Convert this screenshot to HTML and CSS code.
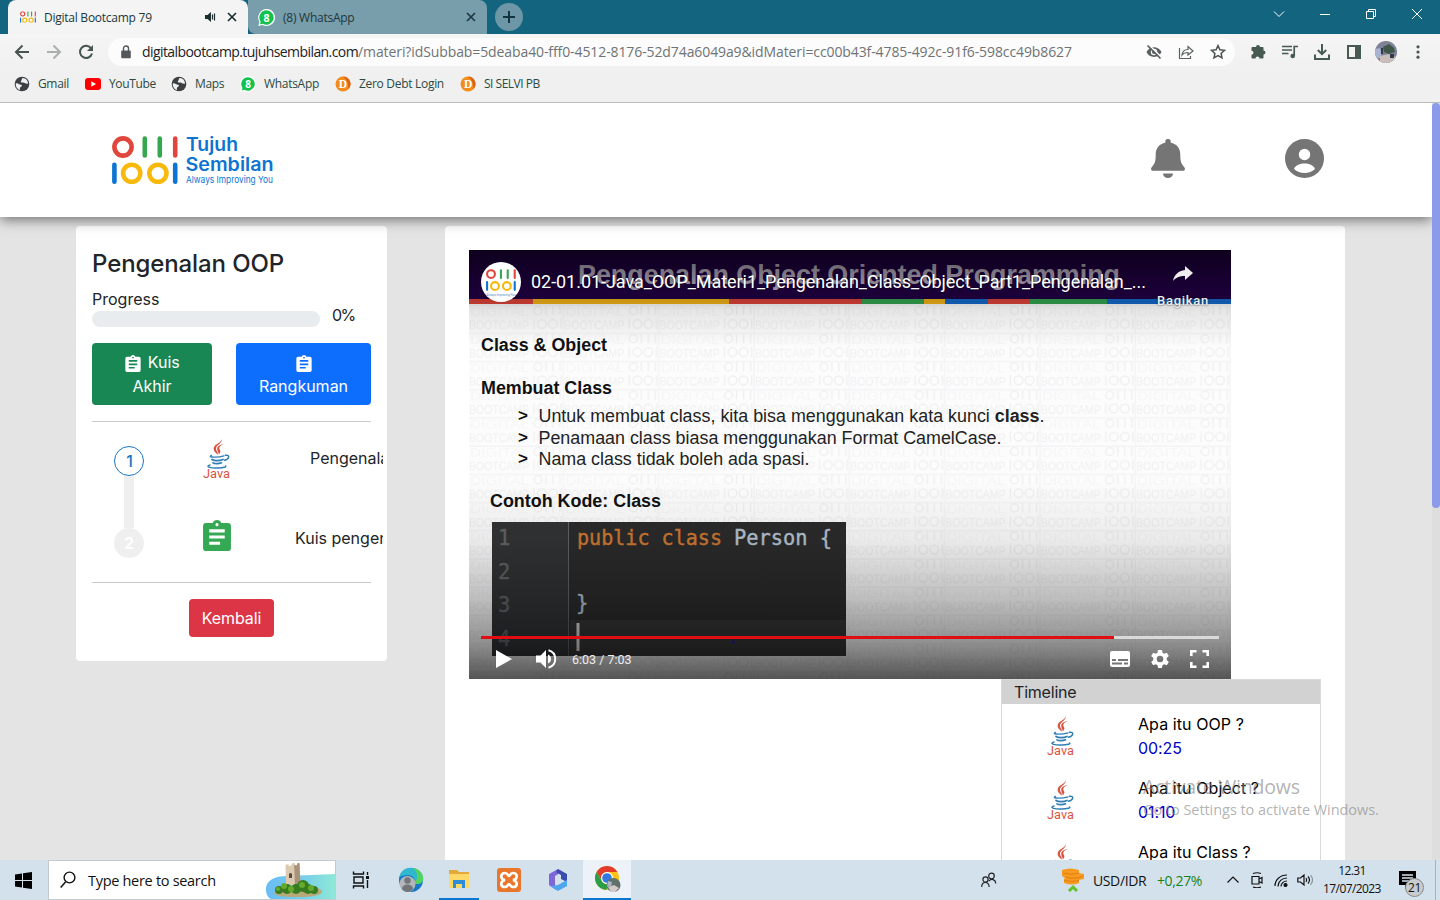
FILE: index.html
```html
<!DOCTYPE html>
<html lang="id">
<head>
<meta charset="utf-8">
<title>Digital Bootcamp 79</title>
<link rel="stylesheet" href="styles.css">
</head>
<body>
<svg class="defs" width="0" height="0">
  <symbol id="java" viewBox="0 0 28 40">
    <g fill="#d9533f">
      <path d="M18.500 0c1.500 4-5.500 6-5.500 9.500 0 2.500 2 3.500 2 6-4.500-3-5.500-6-3-9C14 4.500 18.500 3.500 18.500 0z"/>
      <path d="M21 5c-4 1.500-5.500 3.500-4.300 5.500 1.200 2 .8 3.500-1 5 .3-2-1.700-3.500-1.500-6C14.500 7 17.500 5.300 21 5z"/>
    </g>
    <g fill="none" stroke="#2f7fb5" stroke-linecap="round">
      <path d="M8.500 16.300C3.500 18.500 15 18.800 21 16.800" stroke-width="1.300"/>
      <path d="M9 20.500C11 22 17 22 20 20.500M10 23.800C11.500 25 16 25 18.500 23.800" stroke-width="1.700"/>
      <path d="M22.500 16.300C27.500 15.500 26.500 20 21.500 21.300" stroke-width="1.400"/>
      <path d="M7 26C1 28 9 29.300 15 29C20 28.800 24 28 22.500 27" stroke-width="1.400"/>
    </g>
    <text x="0" y="39" class="java-word" textLength="27" lengthAdjust="spacingAndGlyphs">Java</text>
  </symbol>
  <symbol id="clip" viewBox="3 1 18 20">
    <path fill="currentColor" fill-rule="evenodd" d="M19 3h-4.200a3 3 0 0 0-5.600 0H5a2 2 0 0 0-2 2v14a2 2 0 0 0 2 2h14a2 2 0 0 0 2-2V5a2 2 0 0 0-2-2zM12 3a1 1 0 1 1 0 2 1 1 0 0 1 0-2zm2 14H7v-2h7zm3-4H7v-2h10zm0-4H7V7h10z"/>
  </symbol>
  <symbol id="globe" viewBox="0 0 16 16">
    <circle cx="8" cy="8" r="7.300" fill="#3c4043"/>
    <path d="M1.800 7.500C4 6.800 5 8.500 7 8.800c1.500.3 1 2-.4 2.300-1 .4-.4 2-1 3.100C3 13 1.500 10.500 1.800 7.500zM8.500 2c-1.300 1-.2 2-1.300 2.700C6 5.500 7.300 6.700 9 6.500c2-.1 2 1.500 4.900 1.300C14.300 4.800 12 2 8.500 2z" fill="#f0f0f0"/>
  </symbol>
  <symbol id="wa" viewBox="0 0 16 16">
    <path d="M8 0a8 8 0 1 1-3.800 15L.3 16l1-3.900A8 8 0 0 1 8 0z" fill="#fff"/>
    <path d="M8 1.200a6.800 6.800 0 1 1-3.600 12.600l-2.600.7.700-2.600A6.800 6.800 0 0 1 8 1.200z" fill="#12c24c"/>
    <text x="8" y="11.800" class="wa-num" text-anchor="middle">8</text>
  </symbol>
  <symbol id="debt" viewBox="0 0 16 16">
    <circle cx="8" cy="8" r="7.500" fill="#f28c1c"/>
    <path d="M8 .5a7.500 7.500 0 0 1 5 13.100C14 9 12 3 8 .5z" fill="#d9621a"/>
    <text x="7.800" y="12" class="debt-d" text-anchor="middle">D</text>
  </symbol>
  <symbol id="mark" viewBox="0 0 66 48">
    <g fill="none" stroke-width="4.600" stroke-linecap="round">
      <g stroke="#e0463c"><circle cx="11" cy="11" r="8.600"/><path d="M63.200 2.500v17"/></g>
      <path d="M32.800 2.500v17M47.800 2.500v17" stroke="#37a650"/>
      <path d="M2.400 28.700v17M63.200 28.700v17" stroke="#0e74d2"/>
      <g stroke="#f8b90d"><circle cx="19.700" cy="37.300" r="8.600"/><circle cx="45.900" cy="37.300" r="8.600"/></g>
    </g>
  </symbol>
</svg>

<div class="screen">
  <div class="tabstrip">
    <div class="tab tab-on">
      <svg class="tab-ico" viewBox="0 0 66 48"><use href="#mark"/></svg>
      <span class="tab-name">Digital Bootcamp 79</span>
      <svg class="speaker" width="12" height="12" viewBox="0 0 12 12"><path d="M1 4h2.500L7 1v10L3.500 8H1z" fill="#1d2f31"/><path d="M8.500 3.500v5M10.500 2.500v7" stroke="#1d2f31" stroke-width="1.200"/></svg>
      <svg width="10" height="10" viewBox="0 0 10 10"><path d="M1 1l8 8M9 1L1 9" stroke="#1d2f31" stroke-width="1.700"/></svg>
    </div>
    <div class="tab tab-off">
      <svg class="tab-wa" viewBox="0 0 16 16"><use href="#wa"/></svg>
      <span class="tab-name tab-name-wa">(8) WhatsApp</span>
      <svg width="10" height="10" viewBox="0 0 10 10"><path d="M1 1l8 8M9 1L1 9" stroke="#1d3a44" stroke-width="1.700"/></svg>
    </div>
    <div class="newtab"><svg width="12" height="12" viewBox="0 0 12 12"><path d="M6 0v12M0 6h12" stroke="#12333f" stroke-width="2"/></svg></div>
    <div class="wincontrols">
      <svg viewBox="0 0 12 12"><path d="M1 3.500l5 5 5-5" /></svg>
      <svg viewBox="0 0 12 12"><path d="M1 6.500h10"/></svg>
      <svg viewBox="0 0 12 12"><path d="M1.500 3.500h7v7h-7zM3.500 3.500v-2h7v7h-2"/></svg>
      <svg viewBox="0 0 12 12"><path d="M1 1l10 10M11 1L1 11"/></svg>
    </div>
  </div>

  <div class="toolbar">
    <div class="nav">
      <svg viewBox="0 0 16 16"><path d="M15 8H2.500M8.500 1.500L2 8l6.500 6.500" fill="none" stroke="#46554f" stroke-width="2"/></svg>
      <svg viewBox="0 0 16 16"><path d="M1 8h12.500M7.500 1.500L14 8l-6.500 6.500" fill="none" stroke="#abb0ae" stroke-width="2"/></svg>
      <svg viewBox="0 0 16 16"><path d="M13.200 4.500A6.100 6.100 0 1 0 14 9.500" fill="none" stroke="#46554f" stroke-width="2"/><path d="M15 1v6H9z" fill="#46554f"/></svg>
    </div>
    <div class="omnibox">
      <svg class="lock" viewBox="0 0 10 14"><path d="M1 5.500h8a.8.800 0 0 1 .8.800v6a1 1 0 0 1-1 1H1.200a1 1 0 0 1-1-1v-6A.8.800 0 0 1 1 5.500z" fill="#54585b"/><path d="M2.500 6V3.500a2.500 2.500 0 0 1 5 0V6" fill="none" stroke="#54585b" stroke-width="1.400"/></svg>
      <span class="url"><span class="host">digitalbootcamp.tujuhsembilan.com</span><span class="path">/materi?idSubbab=5deaba40-fff0-4512-8176-52d74a6049a9&amp;idMateri=cc00b43f-4785-492c-91f6-598cc49b8627</span></span>
      <span class="omni-icons">
        <svg viewBox="0 0 16 16"><path d="M.5 8c3-6.500 12-6.500 15 0-3 6.500-12 6.500-15 0z" fill="#5a5f60"/><circle cx="8" cy="8" r="3.200" fill="#fbfbfb"/><circle cx="8" cy="8" r="2" fill="#5a5f60"/><path d="M2.800 .8l13 13" stroke="#fbfbfb" stroke-width="1.600"/><path d="M1.500 1.500l13 13" stroke="#5a5f60" stroke-width="1.700"/></svg>
        <svg viewBox="0 0 16 16" fill="none" stroke="#5a5f60" stroke-width="1.200"><path d="M1.500 4v10.500h11V12M4 11c.5-4 3-5.500 6-5.500V2.500L15 7l-5 4V8.500C7.500 8.500 5.500 9 4 11z"/></svg>
        <svg viewBox="0 0 16 16"><path d="M8 1.600l1.900 4.200 4.600.5-3.400 3.100.9 4.500-4-2.300-4 2.300.9-4.500L1.500 6.300l4.600-.5z" fill="none" stroke="#4c5152" stroke-width="1.500"/></svg>
      </span>
    </div>
    <div class="ext">
      <svg viewBox="0 0 16 16"><path d="M6 3a2 2 0 1 1 4 0h2.700c.5 0 .8.300.8.800V6.500a2 2 0 1 1 0 4v3.200c0 .5-.3.800-.8.800H9.500a2 2 0 0 0-4 0H2.300a.8.800 0 0 1-.8-.8v-3a2 2 0 1 0 0-4V3.800c0-.5.3-.8.800-.8z" fill="#465a52"/></svg>
      <svg viewBox="0 0 16 16"><path d="M0 2.500h10M0 6h10M0 9.500h6.500M12.200 12V2.500H16" stroke="#465a52" stroke-width="1.700" fill="none"/><circle cx="10.700" cy="12" r="2.300" fill="#465a52"/></svg>
      <svg viewBox="0 0 16 16" fill="none" stroke="#465a52" stroke-width="2"><path d="M8 0v10M3.800 6L8 10.200 12.200 6M1 10.500V15h14v-4.500"/></svg>
      <svg viewBox="0 0 16 16"><path d="M1 1h14v14H1zM3 3v10h6V3z" fill="#465a52" fill-rule="evenodd"/></svg>
      <svg class="avatar" viewBox="0 0 22 22"><defs><clipPath id="av"><circle cx="11" cy="11" r="11"/></clipPath></defs><g clip-path="url(#av)"><path fill="#7d8096" d="M0 0h22v22H0z"/><path fill="#3f5648" d="M8 6l6-3 5 4 1 4-6 2-5-2z"/><path fill="#a8b3d0" d="M0 8l5-1 2 5-2 5-5 1z"/><path fill="#cbbdb9" d="M5 15l9-2 7 3-5 6H5z"/><path fill="#32394e" d="M6 7h2v6H6zM15 13h4v4h-4z"/></g></svg>
      <svg viewBox="0 0 16 16" fill="#465a52"><circle cx="8" cy="2.800" r="1.600"/><circle cx="8" cy="8" r="1.600"/><circle cx="8" cy="13.200" r="1.600"/></svg>
    </div>
  </div>

  <div class="bookmarks">
    <span class="bm bm-gmail"><svg><use href="#globe"/></svg>Gmail</span>
    <span class="bm bm-yt"><svg viewBox="0 0 16 16"><rect y="2" width="16" height="12" rx="3" fill="#f00"/><path d="M6.300 5.300v5.400L11 8z" fill="#fff"/></svg>YouTube</span>
    <span class="bm bm-maps"><svg><use href="#globe"/></svg>Maps</span>
    <span class="bm bm-wa"><svg><use href="#wa"/></svg>WhatsApp</span>
    <span class="bm bm-debt"><svg><use href="#debt"/></svg>Zero Debt Login</span>
    <span class="bm bm-selvi"><svg><use href="#debt"/></svg>SI SELVI PB</span>
  </div>

  <div class="viewport">
    <div class="page">
      <header class="site-head">
        <svg class="logo" width="166" height="52" viewBox="0 0 166 52">
          <svg x="0" y="1" width="66" height="48"><use href="#mark"/></svg>
          <g fill="#0e74d2"><text x="74" y="15.500" class="logo-a" textLength="52" lengthAdjust="spacingAndGlyphs">Tujuh</text>
          <text x="73.500" y="35.500" class="logo-a" textLength="88" lengthAdjust="spacingAndGlyphs">Sembilan</text>
          <text x="74" y="47.500" class="logo-b" textLength="87" lengthAdjust="spacingAndGlyphs">Always Improving You</text></g>
        </svg>
        <div class="head-icons">
          <svg width="34" height="39" viewBox="0 0 34 39" fill="#757575"><path d="M17 0a2.500 2.500 0 0 1 2.500 3.500C26 5 29.300 9.500 29.300 15.500c0 7 .8 9 4.200 13 1 1.500.3 3.300-1.500 3.300H2C.2 31.800-.5 30 .5 28.500c3.400-4 4.200-6 4.200-13 0-6 3.300-10.500 9.800-12A2.500 2.500 0 0 1 17 0zM12 34.500h10a5 4.500 0 0 1-10 0z"/></svg>
          <svg width="39" height="39" viewBox="0 0 39 39"><circle cx="19.500" cy="19.500" r="19.500" fill="#757575"/><circle cx="19.500" cy="15.500" r="5.700" fill="#fff"/><path d="M9 30c1.500-4 6-5.500 10.500-5.500S28.500 26 30 30c-5.500 5.300-15.500 5.300-21 0z" fill="#fff"/></svg>
        </div>
      </header>

      <div class="columns">
        <aside class="side">
          <h1>Pengenalan OOP</h1>
          <div class="progress">
            <div class="progress-l"><span>Progress</span><div class="bar"></div></div>
            <span class="pct">0%</span>
          </div>
          <div class="btns">
            <button class="btn green"><svg class="bclip"><use href="#clip"/></svg> Kuis<br>Akhir</button>
            <button class="btn blue"><svg class="bclip"><use href="#clip"/></svg><br>Rangkuman</button>
          </div>
          <div class="steps">
            <div class="rail"><span class="dot dot-on">1</span><span class="link"></span><span class="dot">2</span></div>
            <div class="lessons">
              <div class="lesson"><svg class="jv"><use href="#java"/></svg><span class="lesson-a">Pengenalan Class Object</span></div>
              <div class="lesson"><svg class="gclip"><use href="#clip"/></svg><span class="lesson-b">Kuis pengenalan</span></div>
            </div>
          </div>
          <button class="btn red">Kembali</button>
        </aside>

        <main class="main">
          <div class="video">
            <svg class="slide" width="762" height="429" viewBox="469 250 762 429">
              <defs>
                <pattern id="wm" patternUnits="userSpaceOnUse" x="469" y="306" width="95.300" height="28.200">
                  <path d="M0 27.500h95M94.500 0v28" stroke="#f4f4f7" stroke-width="1.400"/>
                  <g class="wm"><text x="1" y="10" textLength="59" lengthAdjust="spacingAndGlyphs" opacity=".5">DIGITAL</text><text x="0" y="23" textLength="60" lengthAdjust="spacingAndGlyphs">BOOTCAMP</text></g>
                  <g fill="none" stroke="#f0f0f1" stroke-width="1.500"><circle cx="69" cy="4.500" r="4"/><path d="M77 0v9M84 0v9M91 0v9M65 13v10M92 13v10"/><circle cx="73" cy="18" r="4.300"/><circle cx="84" cy="18" r="4.300"/></g>
                </pattern>
                <linearGradient id="fadeT" x2="0" y2="1"><stop offset="0" stop-color="#000" stop-opacity=".58"/><stop offset=".35" stop-color="#000" stop-opacity=".25"/><stop offset=".62" stop-color="#000" stop-opacity=".09"/><stop offset="1" stop-color="#000" stop-opacity="0"/></linearGradient>
                <linearGradient id="fadeB" x2="0" y2="1"><stop offset="0" stop-color="#000" stop-opacity="0"/><stop offset=".3" stop-color="#000" stop-opacity=".07"/><stop offset=".6" stop-color="#000" stop-opacity=".25"/><stop offset=".82" stop-color="#000" stop-opacity=".43"/><stop offset="1" stop-color="#000" stop-opacity=".66"/></linearGradient>
              </defs>
              <path fill="#fcfcfc" d="M469 250h762v429H469z"/>
              <path fill="url(#wm)" d="M469 304h762v375H469z"/>
              <path fill="#210044" d="M469 250h762v49H469z"/>
              <text x="578" y="284" class="ghost" textLength="542" lengthAdjust="spacingAndGlyphs">Pengenalan Object Oriented Programming</text>
              <g><path fill="#d84238" d="M469 299h64v5h-64zM729 299h133v5H729zM988 299h42v5h-42z"/><path fill="#eeb018" d="M533 299h196v5H533zM924 299h21v5h-21z"/><path fill="#33a04f" d="M862 299h62v5h-62zM1030 299h77v5h-77z"/><path fill="#1267c6" d="M945 299h43v5h-43zM1107 299h124v5h-124z"/></g>
              <g class="slide-h">
                <text x="481" y="351" textLength="126" lengthAdjust="spacingAndGlyphs">Class &amp; Object</text>
                <text x="481" y="394" textLength="131" lengthAdjust="spacingAndGlyphs">Membuat Class</text>
                <text x="490" y="506.500" textLength="171" lengthAdjust="spacingAndGlyphs">Contoh Kode: Class</text>
                <text x="518" y="421" class="gt">&gt;</text><text x="518" y="442.500" class="gt">&gt;</text><text x="518" y="464" class="gt">&gt;</text>
              </g>
              <g class="slide-p">
                <text x="538.500" y="422" textLength="506" lengthAdjust="spacingAndGlyphs">Untuk membuat class, kita bisa menggunakan kata kunci <tspan class="b">class</tspan>.</text>
                <text x="538.500" y="443.500" textLength="463" lengthAdjust="spacingAndGlyphs">Penamaan class biasa menggunakan Format CamelCase.</text>
                <text x="538.500" y="465" textLength="271" lengthAdjust="spacingAndGlyphs">Nama class tidak boleh ada spasi.</text>
              </g>
              <path fill="#2b2b2b" d="M492 522h354v134H492z"/><path fill="#313335" d="M492 522h76v134h-76z"/><path fill="#363636" d="M570 620h276v36H570z"/><path stroke="#606264" d="M568.500 522v134"/>
              <g class="code">
                <text x="577" y="545" fill="#cc7832" stroke="#cc7832" textLength="145" lengthAdjust="spacingAndGlyphs">public class</text>
                <text x="734" y="545" fill="#b4c1d0" stroke="#b4c1d0" textLength="98" lengthAdjust="spacingAndGlyphs">Person {</text>
                <text x="576" y="610" fill="#b4c1d0" stroke="#b4c1d0">}</text>
                <g fill="#606366" class="nums"><text x="498" y="545">1</text><text x="498" y="579">2</text><text x="498" y="612">3</text><text x="498" y="646">4</text></g>
              </g>
              <path fill="#ddd" d="M576.500 623h3v28h-3z"/>
              <circle cx="733" cy="642" r="1.500" fill="#1818c0"/>
              <path fill="url(#fadeT)" d="M469 250h762v98H469z"/>
              <path fill="url(#fadeB)" d="M469 480h762v199H469z"/>
            </svg>
            <div class="v-top">
              <span class="channel"><svg width="30" height="22" viewBox="0 0 66 48"><use href="#mark"/></svg><span>Always Improving You</span></span>
              <span class="v-title">02-01.01-Java_OOP_Materi1_Pengenalan_Class_Object_Part1_Pengenalan_...</span>
              <span class="share"><svg width="22" height="18" viewBox="0 0 22 18"><path d="M13 1l8 7-8 7v-4C7 11 4 12.500 1 16 2 10 6 6 13 5z" fill="#eee"/></svg>Bagikan</span>
            </div>
            <div class="v-bottom">
              <div class="seek"><div class="seek-done"></div></div>
              <div class="ctl">
                <svg class="c-play" width="16" height="18" viewBox="0 0 16 18"><path d="M0 0l16 9L0 18z" fill="#fff"/></svg>
                <svg class="c-vol" width="21" height="20" viewBox="0 0 21 20"><path d="M0 6.500h4.500L10 1v18l-5.500-5.500H0z" fill="#fff"/><path d="M12 5.500c4 1.500 4 7.500 0 9z" fill="#fff"/><path d="M12.500 1.300c9 2.500 9 14.900 0 17.400" fill="none" stroke="#fff" stroke-width="2"/></svg>
                <span class="time">6:03 / 7:03</span>
                <svg class="c-cc" width="20" height="16" viewBox="0 0 20 16"><rect width="20" height="16" rx="2" fill="#fff"/><path d="M2 9h4M8 9h10M2 12.500h10M14 12.500h4" stroke="#777" stroke-width="1.800"/></svg>
                <svg class="c-set" width="20" height="20" viewBox="0 0 20 20"><path fill="#fff" fill-rule="evenodd" d="M8 1h4l.5 2.700 1.700 1 2.600-1 2 3.400-2.100 1.800v2.200l2.100 1.800-2 3.400-2.600-1-1.700 1L12 19H8l-.5-2.700-1.700-1-2.600 1-2-3.400 2.100-1.800V8.900L1.200 7.100l2-3.400 2.600 1 1.700-1zM10 6.700a3.300 3.300 0 1 0 0 6.600 3.300 3.300 0 0 0 0-6.600z"/></svg>
                <svg class="c-full" width="19" height="18" viewBox="0 0 19 18"><path d="M1.300 6V1.300H6.500M12.500 1.300h5.200V6M17.700 12v4.700h-5.200M6.500 16.700H1.300V12" fill="none" stroke="#fff" stroke-width="2.600"/></svg>
              </div>
            </div>
          </div>
          <div class="timeline">
            <div class="tl-head">Timeline</div>
            <div class="tl-row"><svg class="jv"><use href="#java"/></svg><div>Apa itu OOP ?<br><span class="ts">00:25</span></div></div>
            <div class="tl-row"><svg class="jv"><use href="#java"/></svg><div>Apa itu Object ?<br><span class="ts">01:10</span></div></div>
            <div class="tl-row"><svg class="jv"><use href="#java"/></svg><div>Apa itu Class ?</div></div>
          </div>
        </main>
      </div>
    </div>
    <div class="scroll"><div class="thumb"></div></div>
  </div>

  <div class="taskbar">
    <div class="start"><svg width="17" height="17" viewBox="0 0 17 17"><path d="M0 2.400l7-1V8H0zM8 1.300L17 0v8H8zM0 9h7v6.600l-7-1zM8 9h9v8l-9-1.300z" fill="#000"/></svg></div>
    <div class="search">
      <svg class="lens" width="16" height="18" viewBox="0 0 16 18"><circle cx="9.500" cy="6.500" r="5.400" fill="none" stroke="#111" stroke-width="1.400"/><path d="M5.500 11L.7 16.500" stroke="#111" stroke-width="1.500"/></svg>
      <span>Type here to search</span>
      <svg class="isle" width="70" height="38" viewBox="0 0 70 38">
        <defs><linearGradient id="sea"><stop offset="0" stop-color="#6bbcf4"/><stop offset=".5" stop-color="#74cdec"/><stop offset="1" stop-color="#8fe8d6"/></linearGradient></defs>
        <path d="M1 28C1 19 10 15 22 15l48-2v25H6C2 36 1 32 1 28z" fill="url(#sea)"/>
        <path d="M9 32q5-7 26-7t22 6q-2 5-24 5T9 32z" fill="#b9a878"/>
        <path d="M20.500 4l3-1v2l3-.5V2.500l3.500-.5v2l2 .5V2.500l2.500-.5 1 22H21z" fill="#dccab0"/><path d="M29 2v2l3 .5V2.500l2.500-.5 1 22H30z" fill="#a8937a"/><path d="M24 13q1.500-2 3 0v4h-3z" fill="#5a493b"/>
        <g fill="#377c20"><circle cx="14" cy="29" r="4"/><circle cx="22" cy="28" r="5"/><circle cx="31" cy="28" r="5"/><circle cx="38" cy="25" r="6"/><circle cx="43" cy="28" r="5"/><circle cx="49" cy="29" r="4"/></g>
        <g fill="#65ab2a"><circle cx="19" cy="25" r="3"/><circle cx="26" cy="28" r="3"/><circle cx="37" cy="24" r="3"/><circle cx="13" cy="28" r="2"/><circle cx="46" cy="27" r="3"/></g>
      </svg>
    </div>
    <div class="apps">
      <div class="app"><svg width="18" height="18" viewBox="0 0 18 18" fill="none" stroke="#111" stroke-width="1.400"><path d="M1.500 .5v2.500h10V.5M2 6h9v6H2zM1.500 17.500v-2.500h10v2.500M15.500 1v3M15.500 9v8"/><path d="M14 6.500h3" stroke-width="3"/></svg></div>
      <div class="app"><svg class="edge" width="26" height="26" viewBox="0 0 26 26"><circle cx="13" cy="13" r="12" fill="#1678c5"/><path d="M1.500 10C3 3 9 0 15 1c7 1 11 7 10 12-1 4-6 5-9 3 2-4-1-8-6-8-4 0-7 1-8.500 2z" fill="#2fb9cf"/><path d="M15 1c7 1 11 7 10 12-1 4-6 5-9 3 5-4 4-11-1-15z" fill="#54d35d"/><circle cx="9.500" cy="17" r="8" fill="#b2b6ba"/><circle cx="9.500" cy="13.500" r="3.200" fill="#70757b"/><path d="M4 22c0-6 11-6 11 0-3 4-8 4-11 0z" fill="#70757b"/></svg></div>
      <div class="app app-run"><svg width="22" height="20" viewBox="0 0 22 20"><path d="M1 1h8l2 2h10v16H1z" fill="#e5a93a"/><path d="M1 5h20v14H1z" fill="#ffd968"/><path d="M5 11h12v8h-3v-4H8v4H5z" fill="#2f8cd8"/></svg></div>
      <div class="app"><svg width="24" height="24" viewBox="0 0 24 24"><rect width="24" height="24" rx="3" fill="#e8762b"/><path d="M8 5c-5 0-5 6 0 7-5 1-5 7 0 7 3 0 3-3 4-3s1 3 4 3c5 0 5-6 0-7 5-1 5-7 0-7-3 0-3 3-4 3s-1-3-4-3z" fill="none" stroke="#fff" stroke-width="2.600"/></svg></div>
      <div class="app"><svg width="22" height="24" viewBox="0 0 22 24"><path d="M11 1L2 6v11l7 5-1-5V8l7-4z" fill="#7e66d9"/><path d="M11 1l9 5v8l-6-3V7L9 4z" fill="#3c4bb0"/><path d="M20 12v6l-9 5-8-5 8-1 7-4z" fill="#4fa5ee"/></svg></div>
      <div class="app app-on"><svg class="chrome" width="28" height="28" viewBox="0 0 28 28"><circle cx="13" cy="13" r="12" fill="#fbc116"/><path d="M2.600 7A12 12 0 0 1 23.400 7H13a6 6 0 0 0-5 9z" fill="#e33b2e"/><path d="M2.600 7l5.600 9.500A6 6 0 0 0 16 18.500L12 25A12 12 0 0 1 2.600 7z" fill="#2b9f48"/><circle cx="13" cy="13" r="6" fill="#fff"/><circle cx="13" cy="13" r="4.800" fill="#3379e2"/><circle cx="19.500" cy="20" r="7" fill="#60706a"/><path d="M14 22l6-2 5 3-4 4h-4z" fill="#d3c9c8"/><path d="M14 16l4 1-1 4-4 1z" fill="#aeb5c6"/></svg></div>
    </div>
    <svg class="people" width="16" height="16" viewBox="0 0 16 16" fill="none" stroke="#222" stroke-width="1.200"><circle cx="10.500" cy="4" r="2.800"/><circle cx="4.500" cy="7.500" r="2.600"/><path d="M.7 15c0-6 7.500-6 7.500 0M8 9c2.500-3 6.500-1.500 6.800 2.500"/></svg>
    <div class="fx"><svg width="24" height="24" viewBox="0 0 24 24"><path d="M1 2q8-3 17 0v3l5 1v5l-5 1v3q-7 3-15 0v-4l1-1-3-2z" fill="#f79a1f"/><path d="M2 5q8 2.500 16 0M5 9q9 3 17-1M3 12.500q8 2 15 0" stroke="#e07f13" fill="none"/><path d="M8 23L12 19l4 4" fill="none" stroke="#62c22a" stroke-width="3"/></svg><span class="pair">USD/IDR</span><span class="gain">+0,27%</span></div>
    <div class="tray">
      <svg viewBox="0 0 16 16"><path d="M2.500 10.500L8 5l5.500 5.500"/></svg>
      <svg viewBox="0 0 16 16"><path d="M3 4.500h7v7.500H3zM10 7l3-1.500v5.500l-3-1.500M4 1.500q4-1.500 8 0M4 15q4 1.500 8 0"/></svg>
      <svg viewBox="0 0 16 16"><path d="M2 14C2 8 7 3 14 3M5 14.500c0-5 4-8.500 9-8.500M8 14.500C8 11.500 10.500 9 14 9"/><circle cx="12.500" cy="13" r="1.500" fill="#111"/></svg>
      <svg viewBox="0 0 16 16"><path d="M.8 6h2.700L7 3v10L3.500 10H.8zM9 6q1.500 2 0 4M11 4.500q3 3.500 0 7"/><path d="M13.500 3q4 5 0 10" stroke="#8b959c"/></svg>
    </div>
    <div class="clock">12.31<br>17/07/2023</div>
    <div class="notif"><svg width="17" height="18" viewBox="0 0 17 18"><path d="M0 0h17v14H10l-4 4v-4H0z" fill="#000"/><path d="M3 4h11M3 7h11M3 10h7" stroke="#d3e1ec" stroke-width="1.300"/></svg><span class="badge">21</span></div>
    <span class="peek"></span>
  </div>
  <div class="activate"><div class="act-a">Activate Windows</div><div class="act-b">Go to Settings to activate Windows.</div></div>
</div>
</body>
</html>
```

FILE: styles.css
```css
* { box-sizing: border-box; }
body { margin: 0; font-family: Inter, "Liberation Sans", sans-serif; }
.defs { position: absolute; }
svg { display: block; flex: none; }
.screen { position: relative; width: 1440px; height: 900px; overflow: hidden; display: flex; flex-direction: column; white-space: nowrap; }

.java-word { font: 12.500px Roboto, sans-serif; fill: #d9533f; }
.wa-num { font: 700 10px "Open Sans", sans-serif; fill: #fff; }
.debt-d { font: 700 11.500px "Liberation Serif", serif; fill: #fff; }

/* Tab strip */
.tabstrip, .toolbar, .bookmarks, .taskbar { font-family: "Open Sans", "Noto Sans", sans-serif; }
.tabstrip { height: 34px; background: #13647f; display: flex; align-items: center; padding-left: 8px; flex: none; }
.tab { height: 34px; width: 240px; display: flex; align-items: center; padding: 0 11px 0 12px; font-size: 12px; color: #21373a; }
.tab-on { background: #f4f4f4; border-radius: 8px 8px 0 0; }
.tab-off { background: #789eac; border-radius: 0 8px 0 8px; width: 239px; padding: 0 11px 0 10px; }
.tab-ico { width: 16px; height: 12px; margin-right: 8px; }
.tab-name { flex: 1; letter-spacing: -.25px; }
.tab-wa { width: 17px; height: 17px; margin-right: 8px; }
.speaker { margin-right: 11px; }
.newtab { width: 28px; height: 28px; border-radius: 50%; background: #6d96a6; margin-left: 8px; display: flex; align-items: center; justify-content: center; }
.wincontrols { margin-left: auto; display: flex; gap: 34px; padding-right: 17px; align-self: flex-start; padding-top: 8px; }
.wincontrols svg { width: 12px; height: 12px; fill: none; stroke: #fff; stroke-width: 1; }

/* Toolbar */
.toolbar { height: 36px; display: flex; align-items: center; flex: none; background: linear-gradient(#f5f5f5, #f0f0f0); }
.nav { display: flex; gap: 16px; padding: 0 14px; width: 108px; }
.nav svg { width: 16px; height: 16px; }
.omnibox { width: 1127px; height: 28px; border-radius: 14px; background: #fcfcfc; display: flex; align-items: center; padding-left: 13px; }
.lock { width: 10px; height: 14px; margin-right: 11px; }
.url { flex: 1; font-size: 14px; padding-bottom: 1px; }
.host { color: #202124; letter-spacing: -.58px; }
.path { color: #707375; letter-spacing: -.1px; }
.omni-icons { display: flex; gap: 16px; padding-right: 9px; }
.omni-icons svg, .ext svg { width: 16px; height: 16px; }
.ext { display: flex; align-items: center; gap: 16px; padding-left: 15px; }
.ext .avatar { width: 22px; height: 22px; margin: 0 -3px; }

.bookmarks { height: 33px; background: #f0f0f0; border-bottom: 1px solid #bcbcbc; display: flex; align-items: center; padding: 0 0 5px 14px; flex: none; font-size: 12px; color: #2c4a41; letter-spacing: -.35px; }
.bm { display: flex; align-items: center; gap: 8px; }
.bm svg { width: 16px; height: 16px; }
.bm-gmail { width: 71px; }
.bm-yt { width: 86px; }
.bm-maps { width: 69px; }
.bm-wa { width: 95px; letter-spacing: -.3px; }
.bm-debt { width: 125px; letter-spacing: -.3px; }
.bm-selvi { letter-spacing: -.5px; }

/* Web page */
.viewport { height: 757px; display: flex; flex: none; overflow: hidden; }
.page { flex: 1; background: #e4e4e4; height: 757px; overflow: hidden; }
.scroll { width: 8px; background: #dedede; }
.thumb { height: 405px; background: #8c9aea; border-radius: 4px; }
.site-head { position: relative; height: 114px; background: #fff; box-shadow: 0 3px 12px rgba(0,0,0,.5); display: flex; justify-content: space-between; align-items: flex-start; padding: 32px 108px 0 112px; }
.logo-a { font: 600 18.500px Inter, sans-serif; }
.logo-b { font: 9.500px Inter, sans-serif; }
.head-icons { display: flex; gap: 100px; padding-top: 4px; }

.columns { display: flex; gap: 58px; padding: 9px 87px 0 76px; align-items: flex-start; }
.side { width: 311px; height: 435px; background: #fff; border-radius: 4px; padding: 0 16px; color: #212529; font-size: 16px; line-height: 24px; }
.side h1 { margin: 0; padding-top: 23px; font-size: 24px; font-weight: 500; line-height: 30px; height: 61px; letter-spacing: -.1px; }
.progress { display: flex; height: 56px; }
.progress-l { width: 228px; margin-right: 12px; }
.progress-l span { display: block; height: 24px; letter-spacing: 0; }
.bar { height: 16px; background: #e9ecef; border-radius: 8px; }
.pct { padding-top: 16px; letter-spacing: -1.600px; }
.btns { display: flex; justify-content: space-between; padding-bottom: 16px; border-bottom: 1px solid #c9cacb; }
.btn { border: 0; border-radius: 4px; color: #fff; font: 16px/24px Inter, sans-serif; padding: 7px 0; text-align: center; }
.green { width: 120px; background: #198754; }
.blue { width: 135px; background: #0d6efd; }
.red { display: block; width: 85px; height: 38px; background: #dc3545; margin: 16px auto 0; letter-spacing: -.1px; }
.bclip { display: inline-block; width: 16px; height: 17px; vertical-align: -4px; margin: 0 2px 0 1px; }
.blue .bclip { margin: 0; }
.steps { display: flex; height: 161px; border-bottom: 1px solid #c9cacb; }
.rail { width: 111px; flex: none; padding: 24px 0 0 22px; display: flex; flex-direction: column; align-items: flex-start; }
.dot { width: 30px; height: 30px; border-radius: 50%; background: #efefef; color: #fff; font-weight: 600; line-height: 30px; text-align: center; }
.dot-on { background: #fff; border: 1px solid #1976c5; color: #1976c5; line-height: 28px; font-weight: 500; padding-left: 1px; }
.link { width: 10px; height: 52px; background: #efefef; margin-left: 10px; }
.lessons { width: 180px; flex: none; overflow: hidden; padding-top: 17px; }
.lesson { display: flex; align-items: flex-start; height: 82px; }
.lesson-a { padding: 7px 0 0 79px; }
.lesson-b { padding: 5px 0 0 64px; }
.jv { width: 28px; height: 40px; }
.gclip { width: 28px; height: 31px; color: #34a853; margin-top: -1px; }

.main { width: 900px; height: 700px; background: #fff; border-radius: 4px; padding: 24px; }
.video { position: relative; width: 762px; height: 429px; }
.wm { font: 12px "Liberation Sans", sans-serif; fill: #f0f0f2; }
.ghost { font: 700 27px "Liberation Sans", sans-serif; fill: #e0dce4; fill-opacity: .85; }
.slide-h { font: 700 18px "Liberation Sans", sans-serif; fill: #111; }
.slide-h .gt { font-size: 17px; }
.slide-p { font: 17.500px "Liberation Sans", sans-serif; fill: #222; }
.slide-p .b { font-weight: 700; }
.code { font: 20.500px "DejaVu Sans Mono", monospace; stroke-width: .4; }
.nums { stroke: #606366; }
.v-top { position: absolute; left: 12px; right: 12px; top: 12px; display: flex; align-items: flex-start; font-family: Roboto, sans-serif; color: #fff; }
.channel { width: 40px; height: 40px; border-radius: 50%; background: #fff; margin-right: 10px; display: flex; flex-direction: column; align-items: center; padding-top: 7px; gap: 2px; font-size: 3px; color: #4c8bc4; }
.v-title { font-size: 18px; line-height: 40px; width: 625px; letter-spacing: -.05px; text-shadow: 0 0 2px rgba(0,0,0,.5); }
.share { display: flex; flex-direction: column; align-items: center; font-size: 13px; font-weight: 500; line-height: 16px; gap: 10px; padding-top: 3px; color: #eee; width: 54px; text-shadow: 0 0 2px rgba(0,0,0,.8); letter-spacing: .7px; }
.v-bottom { position: absolute; left: 12px; right: 12px; bottom: 0; height: 43px; }
.seek { height: 3px; background: rgba(255,255,255,.65); }
.seek-done { width: 633px; height: 3px; background: #e10d10; }
.ctl { display: flex; align-items: center; height: 40px; padding: 0 10px 0 15px; }
.c-play { margin-right: 24px; }
.c-vol { margin-right: 15px; }
.time { flex: 1; font: 12.500px Roboto, sans-serif; color: #eee; }
.c-cc { margin-left: -1px; }
.c-set { margin: 0 20px; }

.timeline { width: 320px; margin-left: 532px; border: 1px solid #d9d9d9; font-size: 16px; line-height: 24px; color: #000; }
.tl-head { background: #d2d2d2; height: 24px; padding-left: 12px; color: #212529; letter-spacing: -.2px; }
.tl-row { display: flex; height: 64px; padding: 8px 0 8px 45px; letter-spacing: .08px; }
.tl-row .jv { margin: 4px 63px 0 0; }
.ts { color: #0000c8; letter-spacing: -.1px; }

/* Taskbar */
.taskbar { height: 40px; background: #d3e1ec; display: flex; align-items: center; flex: none; color: #111; }
.start { width: 48px; padding-left: 15px; }
.search { width: 288px; height: 40px; background: #fff; border: 1px solid #c4cbd0; display: flex; align-items: center; padding-left: 11px; font-size: 14.500px; letter-spacing: -.3px; }
.lens { margin-right: 12px; }
.isle { margin-left: auto; }
.apps { display: flex; }
.app { width: 49.400px; height: 40px; display: flex; align-items: center; justify-content: center; }
.edge { margin-left: 2px; }
.chrome { margin-left: 2px; }
.app-run { width: 40px; margin: 0 4.700px; border-bottom: 2px solid #0a78d0; }
.app-on { width: 48px; background: #ecf2f7; border-bottom: 2px solid #0a78d0; }
.people { margin-left: 350px; }
.fx { display: flex; align-items: center; margin-left: 64px; font-size: 14px; letter-spacing: -.35px; }
.pair { margin-left: 8px; width: 64px; }
.gain { color: #16841c; width: 68px; }
.tray { display: flex; gap: 8px; }
.tray svg { width: 16px; height: 16px; fill: none; stroke: #111; stroke-width: 1.200; }
.clock { width: 78px; text-align: center; font-size: 12px; line-height: 18px; letter-spacing: -.6px; }
.notif { position: relative; margin-left: 8px; }
.badge { position: absolute; left: 6px; top: 7px; width: 19px; height: 19px; border-radius: 50%; border: 1px solid #888; background: #c9ccce; font-size: 12px; line-height: 17px; text-align: center; letter-spacing: -.4px; }
.peek { width: 1px; height: 40px; margin-left: auto; margin-right: 4px; background: #a3b2bd; }

.activate { position: absolute; left: 1143px; top: 774px; font-family: "Open Sans", sans-serif; color: rgba(130,130,130,.62); }
.act-a { font-size: 19.500px; line-height: 26px; letter-spacing: -.2px; }
.act-b { font-size: 14.500px; line-height: 20px; letter-spacing: -.05px; }
```
